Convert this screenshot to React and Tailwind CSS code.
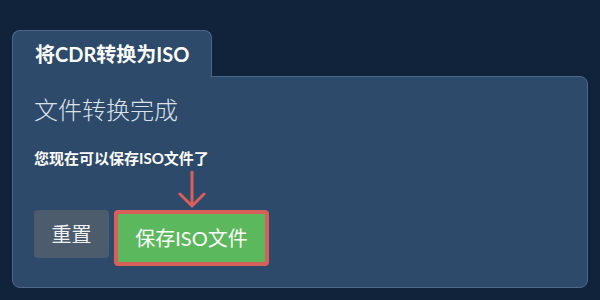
import React from 'react';

const font = { fontFamily: '"Lato", "Noto Sans CJK SC", sans-serif' };

const App = () => {
  return (
    <div className="w-[600px] h-[300px] bg-[#11233a] pt-[30px] px-[12px]" style={font}>
      <div className="relative z-10 -mb-px w-[200px] h-[47px] bg-[#2d4a6a] border border-b-0 border-[#4d6888] rounded-t-lg pl-[22px] flex items-center">
        <span className="text-[20px] font-bold text-white leading-none">将CDR转换为ISO</span>
      </div>
      <div className="h-[212px] bg-[#2d4a6a] border border-[#4d6888] rounded-lg rounded-tl-none px-[21px] pt-[19px]">
        <h2 className="text-[24px] leading-[28px] font-light text-[#dbe2ea]">文件转换完成</h2>
        <p className="mt-[24px] text-[15px] leading-[20px] font-bold text-white">您现在可以保存ISO文件了</p>
        <div className="mt-[42px] flex items-start gap-[5px]">
          <button className="w-[75px] h-[48px] rounded bg-[#4c5c6d] text-[20px] text-[#eef1f4]">重置</button>
          <div className="relative">
            <svg className="absolute left-1/2 -translate-x-1/2 -top-[39px]" width="30" height="38" viewBox="0 0 30 38" fill="none">
              <path d="M15 1 V35 M3 23 L15 35 L27 23" stroke="#d9605a" strokeWidth="3" strokeLinecap="round" strokeLinejoin="round" />
            </svg>
            <button className="w-[155px] h-[56px] rounded border-4 border-[#d9605a] bg-[#5cb85c] text-[20px] text-white">保存ISO文件</button>
          </div>
        </div>
      </div>
    </div>
  );
};

export default App;
